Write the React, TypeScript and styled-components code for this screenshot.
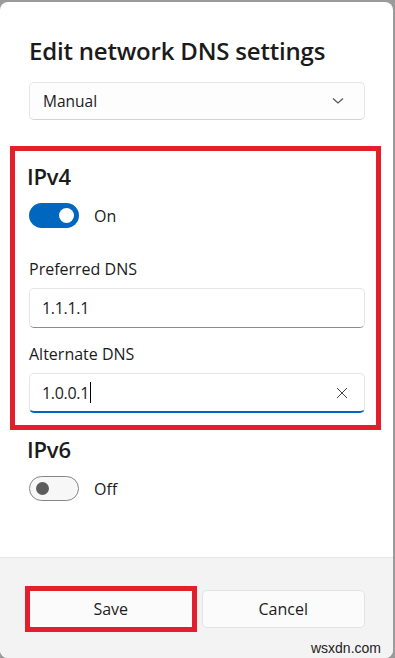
import styled, { createGlobalStyle } from "styled-components";

const GlobalStyle = createGlobalStyle`
	html, body {
		margin: 0;
		padding: 0;
		background: #9b9b9b;
	}
	body {
		font-family: "Open Sans", "Noto Sans", sans-serif;
		color: #1b1b1b;
	}
`;

const Dialog = styled.div`
	width: 393px;
	height: 656px;
	margin-top: 2px;
	background: #ffffff;
	border-radius: 8px;
	overflow: hidden;
	display: flex;
	flex-direction: column;
`;

const Body = styled.div`
	flex: 1;
	padding: 34px 28px 0 29px;
`;

const Title = styled.h1`
	margin: 0 0 16px;
	font-size: 24px;
	font-weight: 600;
	line-height: 30px;
	letter-spacing: -0.2px;
`;

const Select = styled.div`
	height: 38px;
	box-sizing: border-box;
	border: 1px solid #e5e5e5;
	border-bottom-color: #d4d4d4;
	border-radius: 5px;
	display: flex;
	align-items: center;
	justify-content: space-between;
	padding: 0 20px 0 13px;
	font-size: 15.5px;
	background: #fdfdfd;
`;

const Marked = styled.section`
	margin: 26px -16px 0 -19px;
	border: 5px solid #e41f2c;
	padding: 11px 11px 12px 14px;
`;

const Heading = styled.h2`
	margin: 0 0 13px -2px;
	font-size: 22px;
	font-weight: 600;
	line-height: 28px;
	letter-spacing: -0.2px;
`;

const ToggleRow = styled.div`
	display: flex;
	align-items: center;
	gap: 15px;
	font-size: 16px;
`;

const Track = styled.span<{ $on?: boolean }>`
	width: 50px;
	height: 25px;
	box-sizing: border-box;
	border-radius: 13px;
	display: flex;
	align-items: center;
	padding: 0 5px;
	justify-content: ${(p) => (p.$on ? "flex-end" : "flex-start")};
	background: ${(p) => (p.$on ? "#0067c0" : "#f7f7f7")};
	border: ${(p) => (p.$on ? "none" : "1px solid #868686")};
`;

const Knob = styled.span<{ $on?: boolean }>`
	width: ${(p) => (p.$on ? "15px" : "13px")};
	height: ${(p) => (p.$on ? "15px" : "13px")};
	border-radius: 50%;
	background: ${(p) => (p.$on ? "#ffffff" : "#5c5c5c")};
	margin: ${(p) => (p.$on ? "0" : "0 0 0 1px")};
`;

const Label = styled.div<{ $top: number }>`
	margin-top: ${(p) => p.$top}px;
	font-size: 16px;
	line-height: 22px;
`;

const Field = styled.div<{ $active?: boolean }>`
	margin-top: 8px;
	height: 40px;
	box-sizing: border-box;
	border: 1px solid #e6e6e6;
	border-bottom: ${(p) => (p.$active ? "2px solid #0067c0" : "1px solid #8d8d8d")};
	border-radius: 5px;
	display: flex;
	align-items: center;
	justify-content: space-between;
	padding: 0 16px 0 12px;
	font-size: 16px;
	background: #ffffff;
`;

const Value = styled.span`
	display: flex;
	align-items: center;
	letter-spacing: -0.3px;
`;

const Caret = styled.span`
	width: 1px;
	height: 21px;
	background: #000;
	margin-left: 1px;
`;

const Plain = styled.section`
	padding: 5px 0 0 0;
`;

const Footer = styled.div`
	height: 101px;
	box-sizing: border-box;
	background: #f3f3f3;
	border-top: 1px solid #e5e5e5;
	display: grid;
	grid-template-columns: 1fr 1fr;
	gap: 9px;
	padding: 32px 28px 0 29px;
	position: relative;
`;

const Button = styled.button<{ $marked?: boolean }>`
	width: 100%;
	height: 38px;
	border: 1px solid #e3e3e3;
	border-radius: ${(p) => (p.$marked ? "0" : "5px")};
	background: #fbfbfb;
	font-family: inherit;
	font-size: 16px;
	color: #1b1b1b;
	outline: ${(p) => (p.$marked ? "5px solid #e41f2c" : "none")};
	outline-offset: ${(p) => (p.$marked ? "-1px" : "0")};
`;

const Watermark = styled.span`
	position: absolute;
	right: 12px;
	bottom: 2px;
	font-family: "Liberation Sans", Arial, sans-serif;
	font-size: 14px;
	color: #222;
`;

function Toggle({ on, text }: { on?: boolean; text: string }) {
	return (
		<ToggleRow>
			<Track $on={on}>
				<Knob $on={on} />
			</Track>
			{text}
		</ToggleRow>
	);
}

function App() {
	return (
		<>
			<GlobalStyle />
			<Dialog>
				<Body>
					<Title>Edit network DNS settings</Title>
					<Select>
						Manual
						<svg width="12" height="8" viewBox="0 0 12 8">
							<path d="M1 1.5 L6 6 L11 1.5" fill="none" stroke="#555" strokeWidth="1.2" />
						</svg>
					</Select>
					<Marked>
						<Heading>IPv4</Heading>
						<Toggle on text="On" />
						<Label $top={30}>Preferred DNS</Label>
						<Field>
							<Value>1.1.1.1</Value>
						</Field>
						<Label $top={15}>Alternate DNS</Label>
						<Field $active>
							<Value>
								1.0.0.1
								<Caret />
							</Value>
							<svg width="12" height="12" viewBox="0 0 12 12">
								<path d="M1 1 L11 11 M11 1 L1 11" fill="none" stroke="#444" strokeWidth="1" />
							</svg>
						</Field>
					</Marked>
					<Plain>
						<Heading>IPv6</Heading>
						<Toggle text="Off" />
					</Plain>
				</Body>
				<Footer>
					<Button $marked>Save</Button>
					<Button>Cancel</Button>
					<Watermark>wsxdn.com</Watermark>
				</Footer>
			</Dialog>
		</>
	);
}

export default App;
